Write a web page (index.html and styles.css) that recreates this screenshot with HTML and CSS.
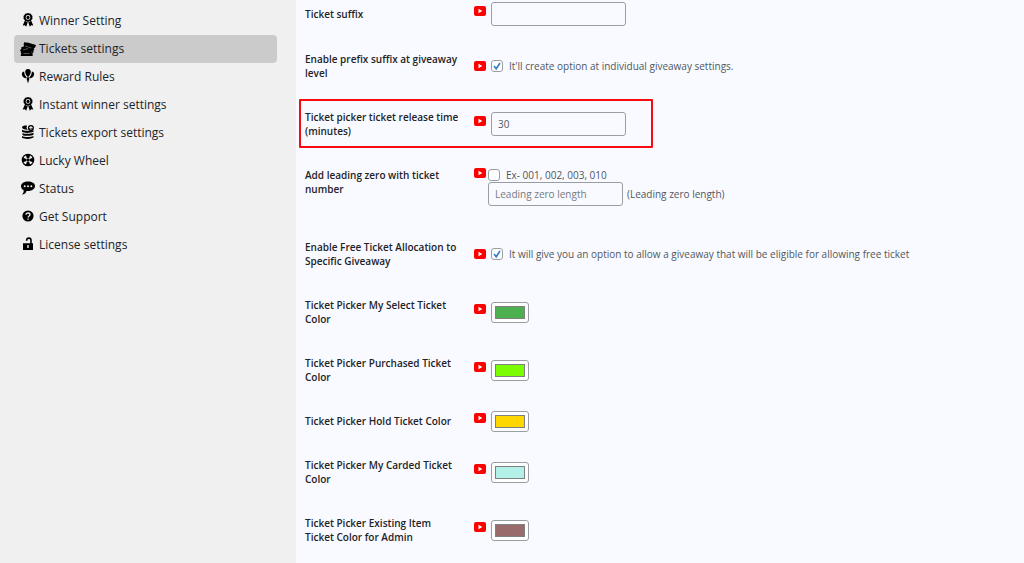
FILE: index.html
```html
<!DOCTYPE html>
<html lang="en">
<head>
<meta charset="utf-8">
<meta name="viewport" content="width=device-width, initial-scale=1">
<title>Tickets settings</title>
<link rel="stylesheet" href="styles.css">
</head>
<body>
<svg class="sprite" aria-hidden="true">
  <symbol id="award" viewBox="0 0 14 14">
    <path fill-rule="evenodd" d="M7 0l1.400.5 1.500.2.6 1.300 1 1.100-.2 1.300.2 1.400-1 1-.6 1.200-1.500.2L7 8.900l-1.400-.7-1.500-.2-.6-1.200-1-1 .2-1.400-.2-1.300 1-1.100.6-1.300 1.500-.2zM7 2a2.400 2.400 0 1 0 0 4.800A2.400 2.400 0 0 0 7 2z"/>
    <circle cx="7" cy="4.400" r="1.600"/>
    <path d="M3.800 7.800l2.900 1.400-1.500 4.500-1.300-1.500-2.200.3zM10.200 7.800L7.300 9.200l1.500 4.500 1.300-1.500 2.200.3z"/>
  </symbol>
  <symbol id="tickets" viewBox="0 0 16 14">
    <path d="M4.500 0l2 .8 1-.3L16 3l-1 2.700-1.200.4.500 1.900-1 .6.300 1.900-1 .5V14H.8v-1.600l.7-.7-.7-.8V9.300L0 8.500l1.500-2L1 5.500l3-1.200L3.600 2z"/>
    <path class="cut" d="M5 4l6.500 2M3 8l5-1.500M3.500 11.500h6M11 10l1.500.5"/>
  </symbol>
  <symbol id="balloons" viewBox="0 0 14 14">
    <path d="M7 0c3.800 0 3.600 4.800 0 8.300C3.400 4.800 3.200 0 7 0zM3.200 2.600c-.1 2.500 1 4.600 2.900 6.600C2.800 9.300.7 7.200.9 4.900c.1-1.500 1.200-2.300 2.300-2.300zM10.800 2.600c.1 2.500-1 4.600-2.900 6.600 3.300.1 5.400-2 5.200-4.300-.1-1.500-1.200-2.300-2.300-2.300zM6.200 8.300h1.600l.5 2.900-.7.300V13.500h-1.200v-2l-.7-.3z"/>
  </symbol>
  <symbol id="stack" viewBox="0 0 14 14">
    <path d="M1 2.300C1 .8 3.300.4 6 .5L5.500 3l1.300 1.700C3.500 4.800 1 4 1 2.300zM1 4.800c2 1.300 7 1.400 11.500.4v1.600C9 8.300 3 8.300 1 6.800zM1.500 7.900c2.500 1.200 8 1.200 11-.1v2C10 11.200 3.500 11.200 1.500 9.900zM1 10.900c2.500 1.300 8.500 1.300 11.500 0v1.700c-2.500 1.700-9 1.700-11.500.2z"/>
    <path fill-rule="evenodd" d="M9.900 0a3 3 0 1 1 0 6 3 3 0 0 1 0-6zm-.5 4.800h1V2.700l.9.800.6-.7-2-1.700-2 1.700.6.700.9-.8z"/>
  </symbol>
  <symbol id="wheel" viewBox="0 0 14 14">
    <circle class="ring" cx="7" cy="7" r="5.700"/>
    <path d="M4.500 1.200h5L8 5.600H6zM12.800 4.500v5L8.400 8V6zM9.500 12.800h-5L6 8.400h2zM1.200 9.500v-5L5.600 6v2z"/>
    <circle cx="7" cy="7" r="1.200"/>
  </symbol>
  <symbol id="chat" viewBox="0 0 14 14">
    <path fill-rule="evenodd" d="M7 .5c4 0 7 1.700 7 4.500s-3 5-7 5l-1.500-.1C5 12 3.500 13.200.8 13.500c1.400-.9 2-2.200 1.900-4.300C1 8.300 0 6.800 0 5.200 0 2.400 3 .5 7 .5zM3.700 4.300a1 1 0 1 0 0 2 1 1 0 0 0 0-2zm3.300 0a1 1 0 1 0 0 2 1 1 0 0 0 0-2zm3.300 0a1 1 0 1 0 0 2 1 1 0 0 0 0-2z"/>
  </symbol>
  <symbol id="help" viewBox="0 0 14 14">
    <circle cx="7" cy="7" r="5.600"/>
    <path class="mark" d="M5 5.700C5 3.400 9 3.500 9 5.600 9 7 7.100 6.900 7.100 8.400M7.100 9.500v1.300"/>
  </symbol>
  <symbol id="lock" viewBox="0 0 14 14">
    <path class="shackle" d="M10 7V3.200C10 .4 5.700.4 5.700 3.200v.6"/>
    <path fill-rule="evenodd" d="M2 6.300h10V13H2zm4.300 1.800v3h1.400v-3z"/>
  </symbol>
  <symbol id="video" viewBox="0 0 12 10">
    <rect class="tube" width="12" height="10" rx="2"/>
    <path class="play" d="M4.500 2.800v4.400L8.300 5z"/>
  </symbol>
</svg>
<div class="layout">
  <nav class="sidebar" aria-label="Settings">
    <a class="item" href="#"><svg class="icon"><use href="#award"/></svg>Winner Setting</a>
    <a class="item active" href="#" aria-current="page"><svg class="icon wide"><use href="#tickets"/></svg>Tickets settings</a>
    <a class="item" href="#"><svg class="icon"><use href="#balloons"/></svg>Reward Rules</a>
    <a class="item" href="#"><svg class="icon"><use href="#award"/></svg>Instant winner settings</a>
    <a class="item" href="#"><svg class="icon"><use href="#stack"/></svg>Tickets export settings</a>
    <a class="item" href="#"><svg class="icon"><use href="#wheel"/></svg>Lucky Wheel</a>
    <a class="item" href="#"><svg class="icon"><use href="#chat"/></svg>Status</a>
    <a class="item" href="#"><svg class="icon"><use href="#help"/></svg>Get Support</a>
    <a class="item" href="#"><svg class="icon"><use href="#lock"/></svg>License settings</a>
  </nav>
  <main class="content">
    <form class="form">
      <div class="row first">
        <label class="name" for="suffix">Ticket suffix</label>
        <div class="field"><svg class="video"><use href="#video"/></svg><input class="text" id="suffix" type="text"></div>
      </div>
      <div class="row">
        <label class="name" for="level">Enable prefix suffix at giveaway level</label>
        <div class="field"><svg class="video low"><use href="#video"/></svg><input class="check" id="level" type="checkbox" checked><label class="hint" for="level">It'll create option at individual giveaway settings.</label></div>
      </div>
      <div class="row highlight">
        <label class="name" for="release">Ticket picker ticket release time (minutes)</label>
        <div class="field"><svg class="video"><use href="#video"/></svg><input class="text" id="release" type="text" value="30"></div>
      </div>
      <div class="row">
        <label class="name" for="zero">Add leading zero with ticket number</label>
        <div class="field top">
          <svg class="video"><use href="#video"/></svg>
          <div class="stack">
            <div class="line"><input class="check" id="zero" type="checkbox"><label class="hint" for="zero">Ex- 001, 002, 003, 010</label></div>
            <div class="line"><input class="text" id="length" type="text" placeholder="Leading zero length"><label class="hint after" for="length">(Leading zero length)</label></div>
          </div>
        </div>
      </div>
      <div class="row">
        <label class="name" for="free">Enable Free Ticket Allocation to Specific Giveaway</label>
        <div class="field"><svg class="video low"><use href="#video"/></svg><input class="check" id="free" type="checkbox" checked><label class="hint" for="free">It will give you an option to allow a giveaway that will be eligible for allowing free ticket</label></div>
      </div>
      <div class="row">
        <label class="name" for="c1">Ticket Picker My Select Ticket Color</label>
        <div class="field"><svg class="video"><use href="#video"/></svg><input class="color" id="c1" type="color" value="#4caf50"></div>
      </div>
      <div class="row">
        <label class="name" for="c2">Ticket Picker Purchased Ticket Color</label>
        <div class="field"><svg class="video"><use href="#video"/></svg><input class="color" id="c2" type="color" value="#7cfc00"></div>
      </div>
      <div class="row">
        <label class="name" for="c3">Ticket Picker Hold Ticket Color</label>
        <div class="field"><svg class="video"><use href="#video"/></svg><input class="color" id="c3" type="color" value="#ffd700"></div>
      </div>
      <div class="row">
        <label class="name" for="c4">Ticket Picker My Carded Ticket Color</label>
        <div class="field"><svg class="video"><use href="#video"/></svg><input class="color" id="c4" type="color" value="#b2f0e8"></div>
      </div>
      <div class="row">
        <label class="name" for="c5">Ticket Picker Existing Item Ticket Color for Admin</label>
        <div class="field"><svg class="video"><use href="#video"/></svg><input class="color" id="c5" type="color" value="#996b6b"></div>
      </div>
    </form>
  </main>
</div>
</body>
</html>
```
FILE: styles.css
```css
*, *::after { box-sizing: border-box; }
body {
  margin: 0;
  background: #f9faff;
  color: #50575e;
  font: 10px/14px "Open Sans", "Noto Sans", sans-serif;
}
input { margin: 0; font: inherit; color: inherit; }
.sprite { display: none; }
.layout { display: flex; min-height: 100vh; }

.sidebar {
  flex: 0 0 296px;
  padding: 7px 19px 0 14px;
  background: #f0f0f0;
}
.item {
  display: flex;
  align-items: center;
  gap: 4px;
  height: 28px;
  padding-left: 7px;
  border-radius: 4px;
  color: #1d2327;
  font-size: 12px;
  text-decoration: none;
}
.active { background: #cbcbcb; }
.icon { width: 14px; height: 14px; flex: none; margin-bottom: 2px; fill: #000; }
.icon.wide { width: 16px; margin: 0 -1px; }
.cut { fill: none; stroke: #cbcbcb; stroke-width: 0.4; }
.ring { fill: none; stroke: #000; stroke-width: 1.2; }
.mark { fill: none; stroke: #f0f0f0; stroke-width: 1.3; }
.shackle { fill: none; stroke: #000; stroke-width: 1.6; }

.content { flex: 1; min-width: 0; }
.row {
  position: relative;
  display: grid;
  grid-template-columns: 155px 1fr;
  column-gap: 14px;
  align-items: center;
  padding: 15px 9px;
}
.first { padding-top: 2px; padding-bottom: 11px; }
.name {
  align-self: start;
  color: #1d2327;
  font-weight: 600;
}
.first .name { padding-top: 5px; }
.field { display: flex; align-items: center; min-height: 14px; margin: -6px 0; }
.first .field { margin: 0; }
.field.top { align-items: flex-start; margin: 0 0 4px; }
.video { width: 12px; height: 10px; flex: none; margin: 0 5px 6px 0; }
.video.low { margin-bottom: 0; }
.top .video { margin: 0 2px 0 0; }
.tube { fill: #f00; }
.play { fill: #fff; }
.text {
  width: 135px;
  height: 24px;
  padding: 0 6px;
  border: 1px solid #9a9da2;
  border-radius: 3px;
  background: #f9faff;
}
.text::placeholder { color: #757a80; opacity: 1; }
.check {
  appearance: none;
  width: 12px;
  height: 12px;
  flex: none;
  border: 1px solid #9a9da2;
  border-radius: 3px;
  background: #fff;
}
.check:checked {
  background: #fff url("data:image/svg+xml,%3Csvg xmlns='http://www.w3.org/2000/svg' viewBox='0 0 10 10'%3E%3Cpath d='M2 5l2.200 2.700L8 2' fill='none' stroke='%233582c4' stroke-width='1.700'/%3E%3C/svg%3E") center / 10px 10px no-repeat;
}
.hint { margin-left: 6px; }
.after { margin-left: 4px; }
.line { display: flex; align-items: center; }
.color {
  width: 38px;
  height: 21px;
  padding: 3px;
  border: 1px solid #9a9da2;
  border-radius: 3px;
  background: #fff;
}
.color::-webkit-color-swatch-wrapper { padding: 0; }
.color::-webkit-color-swatch { border: 1px solid #808080; border-radius: 0; }
.highlight::after {
  content: "";
  position: absolute;
  top: 4px;
  left: 3px;
  width: 354px;
  height: 49px;
  border: 2px solid #fa0a10;
  border-radius: 1px;
  pointer-events: none;
}
```
